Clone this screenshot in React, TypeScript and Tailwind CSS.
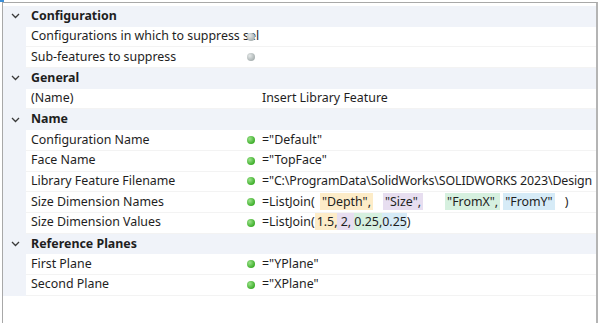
import React from 'react';

type Item = {
  name: string;
  dot?: 'green' | 'gray';
  value?: React.ReactNode;
};

type Group = {
  title: string;
  items: Item[];
};

const Chevron = () => (
  <svg width="9" height="6" viewBox="0 0 9 6" className="block">
    <path d="M1 1l3.5 3.5L8 1" fill="none" stroke="#3a3a3a" strokeWidth="1.3" />
  </svg>
);

const Dot = ({ color }: { color: 'green' | 'gray' }) =>
  color === 'green' ? (
    <span className="relative block w-[8px] h-[8px] shrink-0 rounded-full bg-[radial-gradient(circle_at_35%_35%,#9be38a,#3fae2c_70%)]" />
  ) : (
    <span className="relative block w-[8px] h-[8px] shrink-0 rounded-full bg-[radial-gradient(circle_at_35%_35%,#e4e8e8,#aab2b2_70%)]" />
  );

const names = (
  <>
    =ListJoin({' '}
    <span className="bg-[#fdecc8] px-[2px] ml-[2px]">"Depth",</span>
    <span className="inline-block w-[10px]" />
    <span className="bg-[#e7def0] px-[2px]">"Size",</span>
    <span className="inline-block w-[22px]" />
    <span className="bg-[#d6f0df] px-[2px]">"FromX",</span>
    <span className="inline-block w-[3px]" />
    <span className="bg-[#d6ebf7] px-[2px]">"FromY"</span>
    <span className="inline-block w-[10px]" />)
  </>
);

const values = (
  <>
    =ListJoin(
    <span className="bg-[#fdecc8] pl-[2px]">1.5,</span>
    <span className="bg-[#e7def0]"> 2, </span>
    <span className="bg-[#d6f0df]">0.25,</span>
    <span className="bg-[#d6ebf7]">0.25</span>)
  </>
);

const groups: Group[] = [
  {
    title: 'Configuration',
    items: [
      { name: 'Configurations in which to suppress sel', dot: 'gray' },
      { name: 'Sub-features to suppress', dot: 'gray' },
    ],
  },
  {
    title: 'General',
    items: [{ name: '(Name)', value: 'Insert Library Feature' }],
  },
  {
    title: 'Name',
    items: [
      { name: 'Configuration Name', dot: 'green', value: '="Default"' },
      { name: 'Face Name', dot: 'green', value: '="TopFace"' },
      {
        name: 'Library Feature Filename',
        dot: 'green',
        value: (
          <span className="tracking-[-0.12px]">="C:\ProgramData\SolidWorks\SOLIDWORKS 2023\Design</span>
        ),
      },
      { name: 'Size Dimension Names', dot: 'green', value: names },
      { name: 'Size Dimension Values', dot: 'green', value: values },
    ],
  },
  {
    title: 'Reference Planes',
    items: [
      { name: 'First Plane', dot: 'green', value: '="YPlane"' },
      { name: 'Second Plane', dot: 'green', value: '="XPlane"' },
    ],
  },
];

export default function App() {
  return (
    <div className="w-[600px] h-[323px] bg-white overflow-hidden relative text-[#1e1e1e] text-[12.4px] font-['Segoe_UI','Noto_Sans',sans-serif]">
      <div className="absolute left-0 top-0 w-[4px] h-[2px] bg-[#3d8fd8]" />
      <div className="ml-[2px] mt-[2px] w-[596px] h-[321px] border-l border-t border-[#a8a8a8] border-r-2 border-r-[#b4b4b4] pt-[3px]">
        {groups.map((g) => (
          <div key={g.title}>
            <div className="h-[20.7px] flex items-center bg-[#f0f3f9]">
              <div className="w-[23px] flex justify-center pl-[1px]">
                <Chevron />
              </div>
              <span className="pl-[5px] font-bold">{g.title}</span>
            </div>
            {g.items.map((it) => (
              <div key={it.name} className="h-[20.7px] flex bg-[#f0f3f9]">
                <div className="w-[23px] shrink-0" />
                <div className="flex-1 flex items-center bg-white border-b border-[#f3f3f3] overflow-hidden">
                  <div className="w-[217px] shrink-0 pl-[5px] whitespace-nowrap">{it.name}</div>
                  <div className="flex-1 flex items-center whitespace-nowrap pl-[4px]">
                    {it.dot ? <Dot color={it.dot} /> : <span className="w-[8px] shrink-0" />}
                    <span className="ml-[7px]">{it.value}</span>
                  </div>
                </div>
              </div>
            ))}
          </div>
        ))}
      </div>
    </div>
  );
}
